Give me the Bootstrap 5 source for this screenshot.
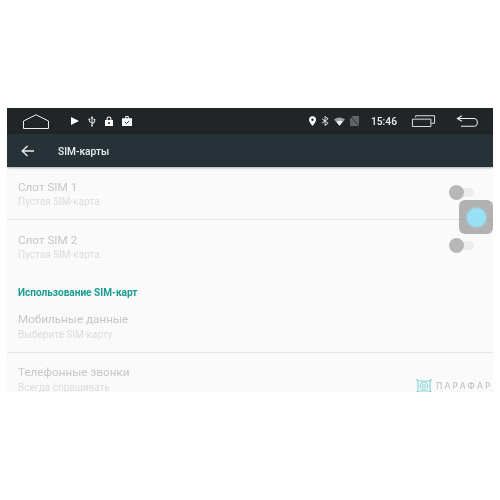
<!DOCTYPE html>
<html lang="en">
<head>
  <meta charset="UTF-8"/>
  <title>SIM-карты</title>
  <link href="https://cdn.jsdelivr.net/npm/bootstrap@5.3.0/dist/css/bootstrap.min.css" rel="stylesheet"/>
  <style>
    body { background: #fff; font-family: Roboto, "Liberation Sans", sans-serif; }
    .page-wrap { padding: 108px 7px 0; }
    .screen { height: 284px; overflow: hidden; background: #fafafa; filter: blur(0.4px); }
    .status-bar { height: 26px; background: #212527; color: #eceff1; padding-left: 16px; padding-right: 15px; }
    .tool-bar { height: 33px; background: #263238; color: #eceff1; padding-left: 14px; box-shadow: 0 1px 2px rgba(0,0,0,.3); }
    .tool-title { font-size: 10.2px; font-weight: 500; margin-left: 24px; margin-top: 2px; }
    .left-icons { margin-left: 22px; gap: 9px; }
    .right-icons { gap: 5px; }
    .clock { font-size: 10.3px; font-weight: 500; margin-left: 7px; margin-right: 9px; margin-top: 1px; }
    .back-icon { margin-left: 15px; }
    .sim-row { height: 53px; padding: 13px 11px 0 11px; }
    .sim-row.ruled { border-bottom: 1px solid #e6e6e6; }
    .sim-row.lower { padding-top: 12px; }
    .sim-row.lower .row-sub { margin-top: 2px; }
    .row-name { font-size: 11.7px; line-height: 14px; color: #c6c6c6; }
    .row-sub { font-size: 10px; line-height: 14px; margin-top: 1px; color: #dcdcdc; }
    .section-title { font-size: 10.05px; font-weight: 700; color: #1a9c90; padding: 13px 11px 0; height: 27px; line-height: 14px; }
    .toggle-track { width: 24px; height: 9px; border-radius: 5px; background: #ececec; position: relative; margin-top: 8px; margin-right: 8px; }
    .toggle-knob { width: 15px; height: 15px; border-radius: 50%; background: #b7b7b7; position: absolute; left: -1px; top: -3px; }
    .assist-btn { position: absolute; left: 452px; top: 92px; width: 34px; height: 34px; border-radius: 6px; background: rgba(140,140,140,.66); display: flex; align-items: center; justify-content: center; }
    .assist-dot { width: 19px; height: 19px; border-radius: 50%; background: #98e0f4; box-shadow: 0 0 3px #98e0f4; }
    .brand-mark { position: absolute; left: 409px; top: 271px; display: flex; align-items: center; gap: 4px; }
    .brand-text { font-size: 8.5px; letter-spacing: 2.1px; color: #b4bcbe; font-family: "DejaVu Sans", sans-serif; white-space: nowrap; }
  </style>
</head>
<body>
  <div class="page-wrap">
    <div class="screen position-relative">
      <div class="status-bar d-flex align-items-center">
        <svg width="26" height="15" viewBox="0 0 26 15" fill="none" stroke="#eceff1" stroke-width="1"><path d="M.5 14.5V7L13 .8 25.500 7v7.500z"/></svg>
        <div class="left-icons d-flex align-items-center">
          <svg width="8" height="8" viewBox="0 0 8 8" fill="#fff"><path d="M0 0l8 4-8 4z"/></svg>
          <svg width="8" height="11" viewBox="0 0 9 11" fill="#eceff1"><path d="M4 0h1l1 2H5v5l2-1.500V4H6.200V2.800h2V4H8v2.200L5 8.500V9.200a1 1 0 1 1-1 0V7.500L1 5.500V4a1 1 0 1 1 1 0v1l2 1.500V2H3z"/></svg>
          <svg width="8" height="10" viewBox="0 0 9 11"><path fill="#fff" d="M0 4.500h9V11H0zM1.800 4.500V3a2.700 2.700 0 0 1 5.400 0v1.500H6V3a1.500 1.500 0 0 0-3 0v1.500z"/><circle cx="4.500" cy="7.700" r="1.100" fill="#212527"/></svg>
          <svg width="10" height="10" viewBox="0 0 11 11"><path fill="#fff" d="M0 2.500h3.500V1q0-1 1-1h2q1 0 1 1v1.500H11V11H0zM4.500 1v1.500h2V1z"/><path fill="none" stroke="#212527" stroke-width="1" d="M3 6.500l2 1.800 3-3"/></svg>
        </div>
        <div class="right-icons d-flex align-items-center ms-auto">
          <svg width="7" height="10" viewBox="0 0 8 11"><path fill="#fff" d="M4 0a4 4 0 0 1 4 4c0 2.500-4 7-4 7S0 6.500 0 4a4 4 0 0 1 4-4z"/><circle cx="4" cy="4" r="1.400" fill="#212527"/></svg>
          <svg width="8" height="10" viewBox="0 0 9 11" fill="none" stroke="#dfe3e5" stroke-width="1.100"><path d="M1 3l7 5-3.500 2.500v-10L8 3 1 8"/></svg>
          <svg width="11" height="9" viewBox="0 0 13 10"><path fill="#9aa0a3" d="M0 2.500Q6.500-2 13 2.500L6.500 10z"/><path fill="#eceff1" d="M2.800 5.200Q6.500 2.800 10.200 5.200L6.500 10z"/></svg>
          <svg width="9" height="10" viewBox="0 0 10 11"><path fill="#5f6568" d="M0 11V3l3-3h7v11z"/><path stroke="#2a2e30" stroke-width="1" d="M0 0l10 11"/></svg>
          <span class="clock">15:46</span>
          <svg width="25" height="12" viewBox="0 0 25 13" fill="none" stroke="#eceff1" stroke-width="1"><path d="M.5 4.500h20v8H.5zM4 2.500V.8h20.500V9H21"/></svg>
          <svg width="22" height="12" viewBox="0 0 23 13" fill="none" stroke="#eceff1" stroke-width="1.100" class="back-icon"><path d="M6 .8L1 3.800 6 6.800M1 3.800h18a3.500 4 0 0 1 0 8.500H5"/></svg>
        </div>
      </div>
      <div class="tool-bar d-flex align-items-center">
        <svg width="13" height="12" viewBox="0 0 13 12" fill="none" stroke="#eceff1" stroke-width="1.400"><path d="M6.500 1L1.200 6l5.300 5M1.200 6H13"/></svg>
        <span class="tool-title">SIM-карты</span>
      </div>

      <div class="sim-row ruled d-flex justify-content-between">
        <div>
          <div class="row-name">Слот SIM 1</div>
          <div class="row-sub">Пустая SIM-карта</div>
        </div>
        <div class="toggle-track"><div class="toggle-knob"></div></div>
      </div>
      <div class="sim-row d-flex justify-content-between">
        <div>
          <div class="row-name">Слот SIM 2</div>
          <div class="row-sub">Пустая SIM-карта</div>
        </div>
        <div class="toggle-track"><div class="toggle-knob"></div></div>
      </div>

      <div class="section-title">Использование SIM-карт</div>

      <div class="sim-row lower ruled">
        <div class="row-name">Мобильные данные</div>
        <div class="row-sub">Выберите SIM-карту</div>
      </div>
      <div class="sim-row lower">
        <div class="row-name">Телефонные звонки</div>
        <div class="row-sub">Всегда спрашивать</div>
      </div>

      <div class="assist-btn"><div class="assist-dot"></div></div>
      <div class="brand-mark">
        <svg width="16" height="14" viewBox="0 0 16 14" fill="none" stroke="#8fd6d6" stroke-width="1.200"><path d="M1 1l3 1h8l3-1-1 3v6l1 3-3-1H4l-3 1 1-3V4z"/><circle cx="8" cy="7" r="3.800"/><circle cx="8" cy="7" r="1.500"/></svg>
        <span class="brand-text">ПАРАФАР</span>
      </div>
    </div>
  </div>
  <script src="https://cdn.jsdelivr.net/npm/bootstrap@5.3.0/dist/js/bootstrap.bundle.min.js"></script>
</body>
</html>
